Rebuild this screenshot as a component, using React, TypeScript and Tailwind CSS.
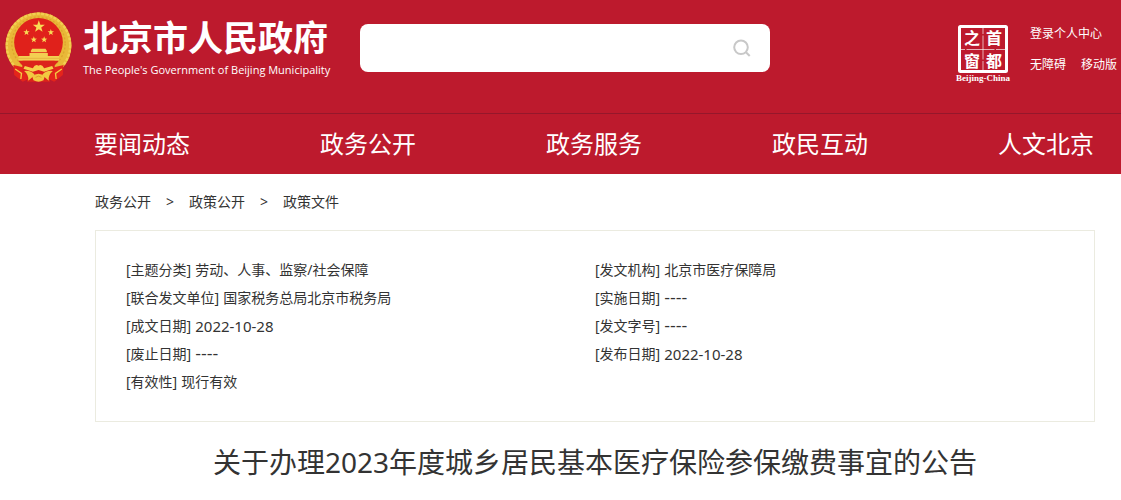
const navItems = ['要闻动态', '政务公开', '政务服务', '政民互动', '人文北京'];
const crumbs = ['政务公开', '政策公开', '政策文件'];

type Field = { label: string; value: string };

const leftFields: Field[] = [
  { label: '主题分类', value: '劳动、人事、监察/社会保障' },
  { label: '联合发文单位', value: '国家税务总局北京市税务局' },
  { label: '成文日期', value: '2022-10-28' },
  { label: '废止日期', value: '----' },
  { label: '有效性', value: '现行有效' },
];

const rightFields: Field[] = [
  { label: '发文机构', value: '北京市医疗保障局' },
  { label: '实施日期', value: '----' },
  { label: '发文字号', value: '----' },
  { label: '发布日期', value: '2022-10-28' },
];

const STAR = 'M0,-10 L2.4,-3.2 L9.5,-3.1 L3.8,1.2 L5.9,8.1 L0,4 L-5.9,8.1 L-3.8,1.2 L-9.5,-3.1 L-2.4,-3.2 Z';

function Emblem() {
  return (
    <svg className="h-[70px] w-[67px] shrink-0" viewBox="15 37 200 210" aria-hidden="true">
      <circle cx="115" cy="137" r="99" fill="#e9b838" />
      <circle cx="115" cy="137" r="95" fill="none" stroke="#f2cf52" strokeWidth="7" strokeDasharray="9 4" />
      <circle cx="115" cy="132" r="80" fill="none" stroke="#dda52c" strokeWidth="4" strokeDasharray="6 6" />
      <circle cx="115" cy="128" r="73" fill="#e0211b" />
      <g fill="#f8dc55">
        <path d={STAR} transform="translate(116 81) scale(1.9)" />
        <path d={STAR} transform="translate(79 98) scale(1)" />
        <path d={STAR} transform="translate(152 98) scale(1)" />
        <path d={STAR} transform="translate(101 120) scale(1)" />
        <path d={STAR} transform="translate(132 120) scale(1)" />
      </g>
      <path d="M92 153 L96 147 H136 L140 153 V158 H92 Z M88 160 H143 V169 H88 Z M55 169 H177 V183 H55 Z" fill="#f3cf52" />
      <path d="M55 176 H177" stroke="#e0a838" strokeWidth="2" />
      <path d="M54 183 H176 L164 197 H66 Z" fill="#dc241b" />
      <path d="M40 196 L68 203 L84 222 L84 238 L68 246 L42 226 Z M190 196 L162 203 L146 222 L146 238 L162 246 L188 226 Z" fill="#e4251b" />
      <path d="M66 197 Q88 190 115 203 Q142 190 164 197 L162 216 Q146 226 150 246 H80 Q84 226 68 216 Z" fill="#dc241b" />
      <path d="M98 206 Q105 192 115 198 Q125 192 132 206 L156 199 L160 207 L132 216 L115 211 L98 216 L70 207 L74 199 Z" fill="#f6d04a" />
      <path d="M72 214 Q92 211 104 226 L84 243 Q87 226 72 214 Z M158 214 Q138 211 126 226 L146 243 Q143 226 158 214 Z" fill="#f1c941" />
      <path d="M96 230 Q115 214 134 230 L130 242 Q115 250 100 242 Z" fill="#f2c640" />
      <path d="M106 233 Q115 226 124 233" fill="none" stroke="#d0921e" strokeWidth="2" />
      <path d="M45 208 L64 221 L62 238 M185 208 L166 221 L168 238" fill="none" stroke="#f4ca43" strokeWidth="4" />
    </svg>
  );
}

function Seal() {
  return (
    <svg className="h-[60px] w-[56px]" viewBox="0 0 56 60" role="img" aria-label="首都之窗">
      <rect x="4.5" y="2.5" width="47" height="45" rx="1" fill="none" stroke="#fff" strokeWidth="3" />
      <path d="M28 4v6M28 11.5v24M28 37v10M5 25.5h5M11.500 25.500h28M41 25.500h9" stroke="#fff" strokeOpacity=".65" />
      <g
        fill="#fff"
        fontFamily="'Noto Sans CJK SC', sans-serif"
        fontSize="16"
        fontWeight="700"
        textAnchor="middle"
      >
        <text x="17" y="20">之</text>
        <text x="39" y="20">首</text>
        <text x="17" y="43">窗</text>
        <text x="39" y="43">都</text>
      </g>
      <text
        x="28"
        y="57"
        fill="#fff"
        fontFamily="'Liberation Serif', serif"
        fontSize="9"
        fontWeight="700"
        textAnchor="middle"
      >
        Beijing-China
      </text>
    </svg>
  );
}

function FieldList({ fields }: { fields: Field[] }) {
  return (
    <dl>
      {fields.map(({ label, value }) => (
        <div key={label} className="flex h-7 gap-1 whitespace-nowrap">
          <dt>[{label}]</dt>
          <dd className={value.startsWith('2') ? 'text-[15px]' : value === '----' ? "font-['DejaVu_Sans'] text-[16px]" : ''}>
            {value}
          </dd>
        </div>
      ))}
    </dl>
  );
}

export default function App() {
  return (
    <div className="min-h-screen bg-white font-['Noto_Sans','Noto_Sans_CJK_SC',sans-serif] text-sm text-[#333]">
      <header className="bg-[#bd1a2d] text-white">
        <div className="flex items-start pt-3 pb-[29px] pl-[5px]">
          <a href="#" className="flex shrink-0 gap-[11px]">
            <Emblem />
            <span className="flex flex-col pt-1">
              <span className="text-[35px] leading-[44px] font-bold">北京市人民政府</span>
              <span className="font-['Open_Sans'] text-[11px] leading-5 whitespace-nowrap">
                The People's Government of Beijing Municipality
              </span>
            </span>
          </a>
          <form className="mt-3 ml-[30px] flex h-12 w-full max-w-[410px] items-center rounded-lg bg-white pr-[18px]">
            <input type="text" aria-label="搜索" className="h-full min-w-0 flex-1 rounded-lg px-4 text-[#333] outline-none" />
            <button type="button" aria-label="搜索">
              <svg className="size-5" viewBox="0 0 20 20" fill="none" stroke="#c8c8c8" strokeWidth="2">
                <circle cx="9" cy="9.300" r="6.800" />
                <path d="M13.700 14l4 4" />
              </svg>
            </button>
          </form>
          <div className="ml-auto flex shrink-0 gap-[19px] pt-3 pr-1">
            <a href="#">
              <Seal />
            </a>
            <div className="flex flex-col gap-[11px] text-[12px] leading-5">
              <a href="#">登录个人中心</a>
              <div className="flex gap-[15px]">
                <a href="#">无障碍</a>
                <a href="#">移动版</a>
              </div>
            </div>
          </div>
        </div>
        <nav className="border-t border-[#95172b] pr-[27px] pl-[94px]">
          <ul className="flex justify-between text-2xl leading-[60px]">
            {navItems.map((item) => (
              <li key={item}>
                <a href="#">{item}</a>
              </li>
            ))}
          </ul>
        </nav>
      </header>
      <main className="pr-[26px] pl-[95px]">
        <nav aria-label="面包屑" className="flex h-14 items-center">
          {crumbs.map((crumb, i) => (
            <span key={crumb} className="flex">
              {i > 0 && <span className="px-[15px]">&gt;</span>}
              <a href="#">{crumb}</a>
            </span>
          ))}
        </nav>
        <section className="grid grid-cols-2 border border-[#ebebe0] px-[30px] py-[25px] leading-7">
          <FieldList fields={leftFields} />
          <FieldList fields={rightFields} />
        </section>
        <h1 className="pt-5 text-center text-[28px] leading-10">
          关于办理2023年度城乡居民基本医疗保险参保缴费事宜的公告
        </h1>
      </main>
    </div>
  );
}
